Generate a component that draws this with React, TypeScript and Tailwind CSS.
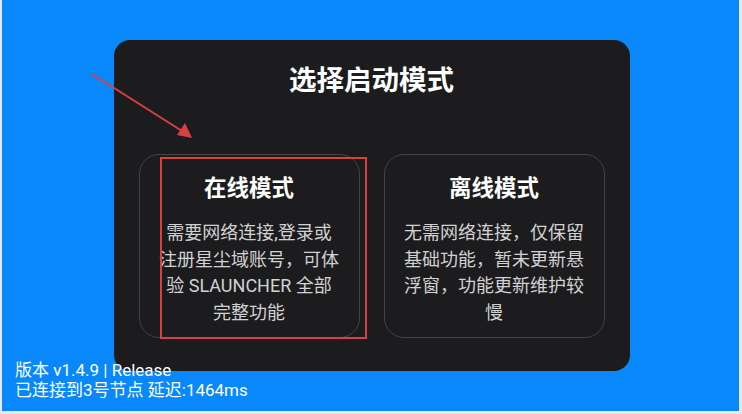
const FONT = { fontFamily: 'Roboto, "Noto Sans CJK SC", "Noto Sans", sans-serif' };

function ModeCard({ title, lines }: { title: string; lines: string[] }) {
  return (
    <div className="flex h-[184px] w-[221px] flex-col items-center rounded-[20px] border border-[#444447] bg-[#1c1c1e] px-[16px] pt-[18px]">
      <div className="text-[22.5px] font-bold leading-[30px] text-white">{title}</div>
      <p className="mt-[17px] text-center text-[18px] leading-[26.5px] text-[#d2d2d2]">
        {lines.map((l, i) => (
          <span key={i} className="block whitespace-nowrap">
            {l}
          </span>
        ))}
      </p>
    </div>
  );
}

export default function App() {
  return (
    <div className="relative flex h-[414px] w-[742px] flex-col overflow-hidden bg-[#e4e9f0]" style={FONT}>
      <div className="ml-[2px] mr-[3px] flex h-[411px] items-center justify-center bg-[#0888fa]">
        <div className="ml-[2px] flex h-[331px] w-[516px] flex-col items-center rounded-[16px] bg-[#1c1c1e] px-[25px]">
          <h1 className="mt-[25px] text-[27.5px] font-bold leading-[32px] text-white">选择启动模式</h1>
          <div className="mt-[57px] flex w-full justify-between">
            <ModeCard title="在线模式" lines={["需要网络连接,登录或", "注册星尘域账号，可体", "验 SLAUNCHER 全部", "完整功能"]} />
            <ModeCard title="离线模式" lines={["无需网络连接，仅保留", "基础功能，暂未更新悬", "浮窗，功能更新维护较", "慢"]} />
          </div>
        </div>
      </div>

      {/* status text over the panel */}
      <div className="absolute left-[15px] top-[360px] text-[17px] leading-[20px] text-white">
        <div>版本 v1.4.9 | Release</div>
        <div>已连接到3号节点 延迟:1464ms</div>
      </div>

      {/* red annotation */}
      <div className="absolute left-[160px] top-[157px] h-[182px] w-[207px] border-2 border-[#d9403f]" />
      <svg className="absolute left-0 top-0" width="742" height="414">
        <line x1="92" y1="74" x2="182" y2="131" stroke="#d9403f" strokeWidth="2" />
        <polygon points="192,138 177,135 185,123" fill="#d9403f" />
      </svg>
    </div>
  );
}
